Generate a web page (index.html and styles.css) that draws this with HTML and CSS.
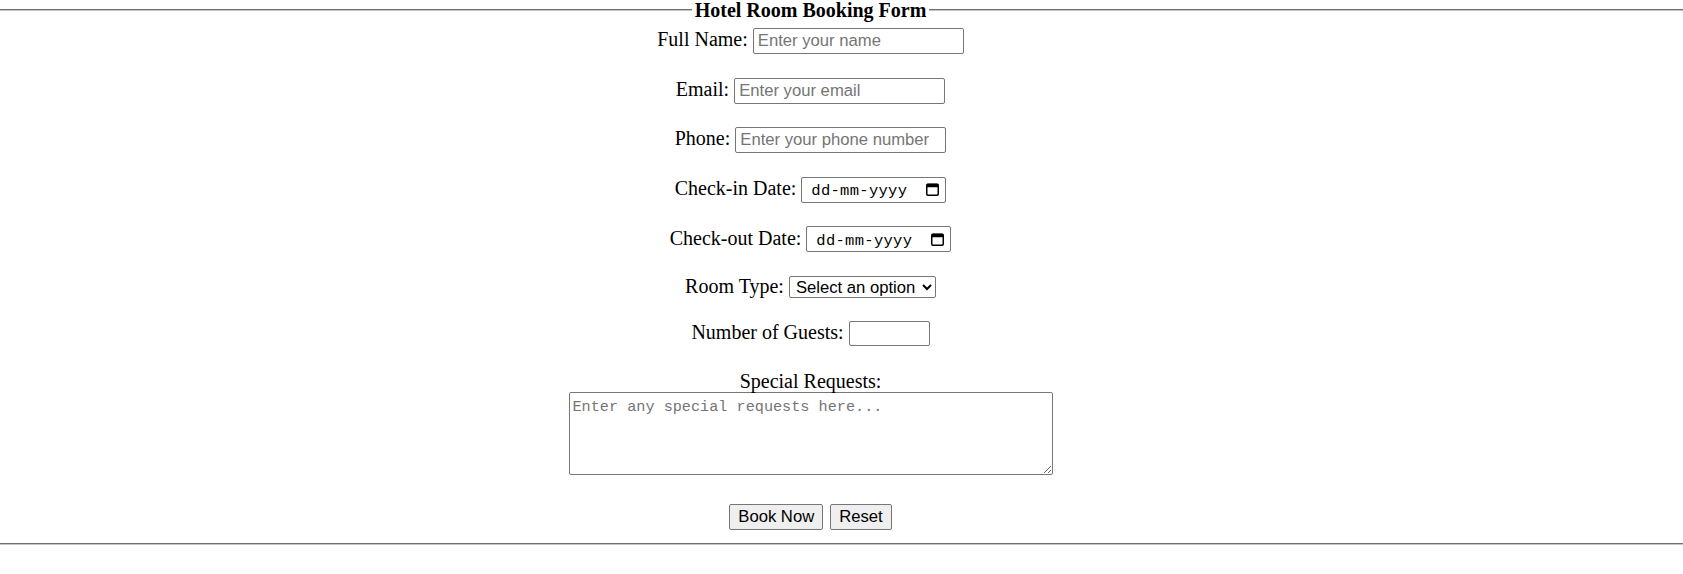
FILE: index.html
```html
<!DOCTYPE html>
<html lang="en">
<head>
<meta charset="utf-8">
<title>Hotel Room Booking Form</title>
<link rel="stylesheet" href="styles.css">
</head>
<body>
<form class="booking">
  <fieldset class="box">
    <legend class="title">Hotel Room Booking Form</legend>
    <div class="fields">
      <div class="row">
        <label class="lbl" for="name">Full Name:</label>
        <input class="ctl text" id="name" type="text" placeholder="Enter your name">
      </div>
      <div class="row">
        <label class="lbl" for="email">Email:</label>
        <input class="ctl text" id="email" type="email" placeholder="Enter your email">
      </div>
      <div class="row">
        <label class="lbl" for="phone">Phone:</label>
        <input class="ctl text" id="phone" type="tel" placeholder="Enter your phone number">
      </div>
      <div class="row">
        <label class="lbl">Check-in Date:</label>
        <div class="ctl date">
          <span class="date-text">dd-mm-yyyy</span>
          <svg class="cal" width="13" height="13" viewBox="0 0 13 13" aria-hidden="true">
            <rect x="0.75" y="1.25" width="11.5" height="11" rx="1.2" fill="none" stroke="#000" stroke-width="1.5"/>
            <rect x="0.5" y="0.75" width="12" height="3.5" rx="1" fill="#000"/>
          </svg>
        </div>
      </div>
      <div class="row">
        <label class="lbl">Check-out Date:</label>
        <div class="ctl date">
          <span class="date-text">dd-mm-yyyy</span>
          <svg class="cal" width="13" height="13" viewBox="0 0 13 13" aria-hidden="true">
            <rect x="0.75" y="1.25" width="11.5" height="11" rx="1.2" fill="none" stroke="#000" stroke-width="1.5"/>
            <rect x="0.5" y="0.75" width="12" height="3.5" rx="1" fill="#000"/>
          </svg>
        </div>
      </div>
      <div class="row">
        <label class="lbl" for="room">Room Type:</label>
        <select class="ctl sel" id="room">
          <option>Select an option</option>
          <option>Single</option>
          <option>Double</option>
          <option>Suite</option>
        </select>
      </div>
      <div class="row">
        <label class="lbl" for="guests">Number of Guests:</label>
        <input class="ctl num" id="guests" type="number">
      </div>
    </div>
    <div class="special">
      <label class="special-lbl" for="req">Special Requests:</label>
      <textarea class="area" id="req" placeholder="Enter any special requests here..."></textarea>
    </div>
    <div class="actions">
      <button class="btn" type="submit">Book Now</button>
      <button class="btn" type="reset">Reset</button>
    </div>
  </fieldset>
</form>
</body>
</html>
```
FILE: styles.css
```css
html, body {
  margin: 0;
  padding: 0;
  background: #fff;
}

body {
  font-family: "Liberation Serif", "Times New Roman", serif;
  font-size: 20px;
  color: #000;
}

.booking {
  margin: 0;
}

.box {
  margin: 0;
  padding: 8px 62px 13px 0;
  border-style: groove;
  border-width: 2px 0;
  border-color: #c4c4c4;
  min-width: 0;
}

.title {
  margin: 0 auto;
  padding: 0 2.5px;
  font-weight: bold;
  font-size: 20px;
  line-height: 20px;
}

.fields {
  display: flex;
  flex-direction: column;
  gap: 23.5px;
}

.row {
  display: flex;
  justify-content: center;
  align-items: baseline;
  gap: 5px;
}

.lbl {
  line-height: 20px;
  white-space: nowrap;
}

.ctl {
  box-sizing: border-box;
  margin: 0;
  border: 1px solid #767676;
  border-radius: 2px;
  background: #fff;
  color: #000;
  font-family: "Liberation Sans", Arial, sans-serif;
  font-size: 16.67px;
}

.text {
  width: 211px;
  height: 26px;
  padding: 0 4px;
}

.text::placeholder,
.area::placeholder {
  color: #757575;
  opacity: 1;
}

.date {
  display: inline-flex;
  align-items: center;
  justify-content: space-between;
  width: 145px;
  height: 26px;
  padding: 0 6px 0 9px;
}

.date-text {
  margin-top: 3px;
  font-family: "Liberation Mono", "Courier New", monospace;
  font-size: 15.5px;
  letter-spacing: 0.3px;
  line-height: 18px;
}

.cal {
  display: block;
  flex: none;
}

.sel {
  width: 147px;
  height: 22px;
  padding: 0 2px;
}

.num {
  width: 81px;
  height: 25px;
  padding: 0 4px;
}

.special {
  margin-top: 23.5px;
  text-align: center;
}

.special-lbl {
  display: block;
  line-height: 22px;
}

.area {
  display: block;
  box-sizing: border-box;
  width: 484px;
  height: 83px;
  margin: 0 auto;
  padding: 5px 3px 2px;
  border: 1px solid #767676;
  border-radius: 2px;
  font-family: "Liberation Mono", "Courier New", monospace;
  font-size: 15.2px;
  color: #000;
  resize: both;
}

.actions {
  display: flex;
  justify-content: center;
  gap: 7px;
  margin-top: 29px;
}

.btn {
  box-sizing: border-box;
  height: 26px;
  margin: 0;
  padding: 0 8px;
  border: 1px solid #767676;
  border-radius: 2px;
  background: #efefef;
  color: #000;
  font-family: "Liberation Sans", Arial, sans-serif;
  font-size: 16.67px;
}
```
